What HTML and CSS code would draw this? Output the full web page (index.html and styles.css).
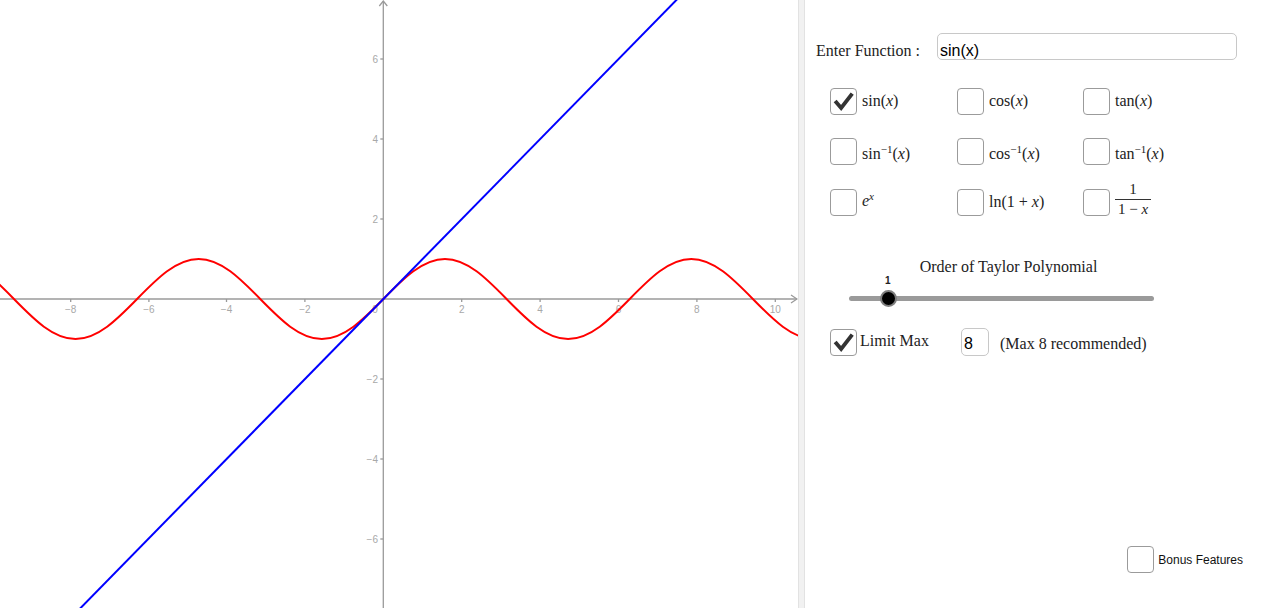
FILE: index.html
```html
<!DOCTYPE html>
<html>
<head>
<meta charset="utf-8">
<link rel="stylesheet" href="styles.css">
</head>
<body>
<div class="app">
  <div class="graph">
    <svg width="798" height="608" viewBox="0 0 798 608">
      <g class="axes">
        <line x1="0" y1="299" x2="797" y2="299"/>
        <polyline points="791,295 797,299 791,303" fill="none"/>
        <line x1="383.3" y1="1" x2="383.3" y2="608"/>
        <polyline points="379.3,6 383.3,1 387.3,6" fill="none"/>
        <g class="ticks">
          <line x1="70.7" y1="299" x2="70.7" y2="302"/>
          <line x1="148.9" y1="299" x2="148.9" y2="302"/>
          <line x1="226.5" y1="299" x2="226.5" y2="302"/>
          <line x1="304.9" y1="299" x2="304.9" y2="302"/>
          <line x1="461.7" y1="299" x2="461.7" y2="302"/>
          <line x1="540.1" y1="299" x2="540.1" y2="302"/>
          <line x1="618.5" y1="299" x2="618.5" y2="302"/>
          <line x1="696.9" y1="299" x2="696.9" y2="302"/>
          <line x1="775.3" y1="299" x2="775.3" y2="302"/>
          <line x1="380.3" y1="59" x2="383.3" y2="59"/>
          <line x1="380.3" y1="139" x2="383.3" y2="139"/>
          <line x1="380.3" y1="219" x2="383.3" y2="219"/>
          <line x1="380.3" y1="379" x2="383.3" y2="379"/>
          <line x1="380.3" y1="459" x2="383.3" y2="459"/>
          <line x1="380.3" y1="539" x2="383.3" y2="539"/>
        </g>
      </g>
      <g class="labels xl">
        <text x="70.7" y="313">−8</text>
        <text x="148.9" y="313">−6</text>
        <text x="226.5" y="313">−4</text>
        <text x="304.9" y="313">−2</text>
        <text x="375" y="313">0</text>
        <text x="461.7" y="313">2</text>
        <text x="540.1" y="313">4</text>
        <text x="618.5" y="313">6</text>
        <text x="696.9" y="313">8</text>
        <text x="775.3" y="313">10</text>
      </g>
      <g class="labels yl">
        <text x="378" y="63">6</text>
        <text x="378" y="143">4</text>
        <text x="378" y="223">2</text>
        <text x="378" y="383">−2</text>
        <text x="378" y="463">−4</text>
        <text x="378" y="543">−6</text>
      </g>
      <g transform="translate(383.4 299) scale(39.2 -40)">
        <path class="sine" vector-effect="non-scaling-stroke" d="M-10.9956 1 C-10.4271 1 -9.9371 0.5123 -9.4248 0 C-8.9125 -0.5123 -8.4225 -1 -7.854 -1 C-7.2855 -1 -6.7955 -0.5123 -6.2832 0 C-5.7709 0.5123 -5.2809 1 -4.7124 1 C-4.1439 1 -3.6539 0.5123 -3.1416 0 C-2.6293 -0.5123 -2.1393 -1 -1.5708 -1 C-1.0023 -1 -0.5123 -0.5123 0 0 C0.5123 0.5123 1.0023 1 1.5708 1 C2.1393 1 2.6293 0.5123 3.1416 0 C3.6539 -0.5123 4.1439 -1 4.7124 -1 C5.2809 -1 5.7709 -0.5123 6.2832 0 C6.7955 0.5123 7.2855 1 7.854 1 C8.4225 1 8.9125 0.5123 9.4248 0 C9.9371 -0.5123 10.4271 -1 10.9956 -1"/>
        <path class="taylor" vector-effect="non-scaling-stroke" d="M-9 -9 L9 9"/>
      </g>
    </svg>
  </div>
  <div class="divider"></div>
  <div class="panel">
    <div class="enter-row">
      <span class="enter-label">Enter Function :</span>
      <div class="text-input wide">sin(x)</div>
    </div>

    <div class="fn-grid">
      <div class="opt"><span class="box checked"><svg viewBox="0 0 26 26"><path d="M4.5 13 L11 20.5 L23 5"/></svg></span><span class="m">sin(<i>x</i>)</span></div>
      <div class="opt"><span class="box"></span><span class="m">cos(<i>x</i>)</span></div>
      <div class="opt"><span class="box"></span><span class="m">tan(<i>x</i>)</span></div>

      <div class="opt"><span class="box"></span><span class="m low">sin<sup>−1</sup>(<i>x</i>)</span></div>
      <div class="opt"><span class="box"></span><span class="m low">cos<sup>−1</sup>(<i>x</i>)</span></div>
      <div class="opt"><span class="box"></span><span class="m low">tan<sup>−1</sup>(<i>x</i>)</span></div>

      <div class="opt"><span class="box"></span><span class="m exp"><i>e</i><sup><i>x</i></sup></span></div>
      <div class="opt"><span class="box"></span><span class="m">ln(1 + <i>x</i>)</span></div>
      <div class="opt"><span class="box"></span><span class="m frac"><span class="num">1</span><span class="den">1 − <i>x</i></span></span></div>
    </div>

    <div class="slider">
      <div class="slider-title">Order of Taylor Polynomial</div>
      <div class="slider-value">1</div>
      <div class="track-wrap">
        <div class="track"></div>
        <div class="knob"></div>
      </div>
    </div>

    <div class="limit-row">
      <div class="opt"><span class="box checked"><svg viewBox="0 0 26 26"><path d="M4.5 13 L11 20.5 L23 5"/></svg></span><span class="m limit">Limit Max</span></div>
      <div class="text-input small">8</div>
      <span class="m rec">(Max 8 recommended)</span>
    </div>

    <div class="bonus">
      <span class="box"></span><span class="bonus-label">Bonus Features</span>
    </div>
  </div>
</div>
</body>
</html>
```

FILE: styles.css
```css
html, body {
  margin: 0;
  padding: 0;
  background: #fff;
  overflow: hidden;
}

.app {
  display: flex;
  width: 1262px;
  height: 608px;
}

.graph {
  width: 798px;
  height: 608px;
  flex: none;
}

.graph svg {
  display: block;
}

.axes line,
.axes polyline {
  stroke: #9a9a9a;
  stroke-width: 1.3;
}

.labels text {
  font-family: "Liberation Sans", Arial, sans-serif;
  font-size: 10px;
  fill: #a8a8a8;
}

.xl text {
  text-anchor: middle;
}

.yl text {
  text-anchor: end;
}

.sine {
  fill: none;
  stroke: #ff0000;
  stroke-width: 2;
}

.taylor {
  fill: none;
  stroke: #0000ff;
  stroke-width: 2;
}

.divider {
  width: 5px;
  flex: none;
  background: #f1f1f1;
  border-left: 1px solid #e2e2e2;
  border-right: 1px solid #e2e2e2;
}

.panel {
  flex: 1;
  display: flex;
  flex-direction: column;
  font-family: "Liberation Serif", "Times New Roman", serif;
  color: #222;
}

.enter-row {
  display: flex;
  align-items: center;
  margin-top: 33px;
  padding-left: 11px;
}

.enter-label {
  width: 121px;
  font-size: 16px;
  padding-top: 8px;
  white-space: nowrap;
}

.text-input {
  box-sizing: border-box;
  border: 1px solid #c8c8c8;
  border-radius: 5px;
  font-family: "Liberation Sans", Arial, sans-serif;
  font-size: 16px;
  color: #000;
  background: #fff;
  display: flex;
  align-items: center;
}

.text-input.wide {
  width: 300px;
  height: 27px;
  padding-left: 2px;
  padding-top: 8px;
}

.text-input.small {
  width: 28px;
  height: 28px;
  padding-left: 2px;
  padding-top: 3px;
}

.fn-grid {
  display: grid;
  grid-template-columns: 127px 126px 1fr;
  grid-template-rows: 26px 26px 26px;
  row-gap: 24.5px;
  margin-top: 28px;
  padding-left: 25px;
}

.opt {
  display: flex;
  align-items: center;
  gap: 5px;
}

.box {
  box-sizing: border-box;
  width: 27px;
  height: 27px;
  flex: none;
  border: 1.6px solid #9b9b9b;
  border-radius: 4px;
  background: #fff;
  display: block;
}

.box svg {
  display: block;
  width: 24px;
  height: 24px;
}

.box svg path {
  fill: none;
  stroke: #333;
  stroke-width: 4.2;
  stroke-linejoin: miter;
}

.m {
  font-size: 16px;
  white-space: nowrap;
}

.m i {
  font-style: italic;
}

.m sup {
  font-size: 11px;
  vertical-align: 6px;
  line-height: 0;
}

.low {
  padding-top: 4px;
}

.exp {
  align-self: flex-start;
  margin-top: 3px;
}

.frac {
  display: inline-flex;
  flex-direction: column;
  align-items: center;
  font-size: 15px;
  line-height: 15px;
  margin-top: -6px;
}

.frac .num {
  padding: 0 4px 2px;
  border-bottom: 1px solid #333;
  align-self: stretch;
  text-align: center;
}

.frac .den {
  padding-top: 2px;
  padding-left: 3px;
  padding-right: 3px;
}

.slider {
  margin-top: 42px;
  margin-left: 44px;
  width: 305px;
  display: flex;
  flex-direction: column;
}

.slider-title {
  font-size: 16px;
  text-align: center;
  padding-left: 14px;
  line-height: 19px;
  white-space: nowrap;
}

.slider-value {
  font-family: "Liberation Sans", Arial, sans-serif;
  font-weight: bold;
  font-size: 10px;
  line-height: 12px;
  margin-top: -1px;
  padding-left: 36px;
}

.track-wrap {
  position: relative;
  height: 18px;
  margin-top: 2px;
}

.track {
  position: absolute;
  left: 0;
  right: 0;
  top: 7px;
  height: 5px;
  border-radius: 3px;
  background: #9a9a9a;
}

.knob {
  position: absolute;
  left: 31px;
  top: 0.5px;
  box-sizing: border-box;
  width: 17px;
  height: 17px;
  border-radius: 50%;
  background: #000;
  border: 2px solid #7f7f7f;
}

.limit-row {
  display: flex;
  align-items: center;
  margin-top: 21px;
  padding-left: 25px;
}

.limit-row .opt {
  width: 131px;
  gap: 3px;
}

.limit {
  align-self: flex-start;
  margin-top: 3px;
}

.rec {
  margin-left: 11px;
  padding-top: 4px;
}

.bonus {
  margin-top: auto;
  margin-bottom: 35px;
  align-self: flex-end;
  margin-right: 19px;
  display: flex;
  align-items: center;
  gap: 4px;
}

.bonus-label {
  font-family: "Liberation Sans", Arial, sans-serif;
  font-size: 12px;
  color: #111;
}
```
